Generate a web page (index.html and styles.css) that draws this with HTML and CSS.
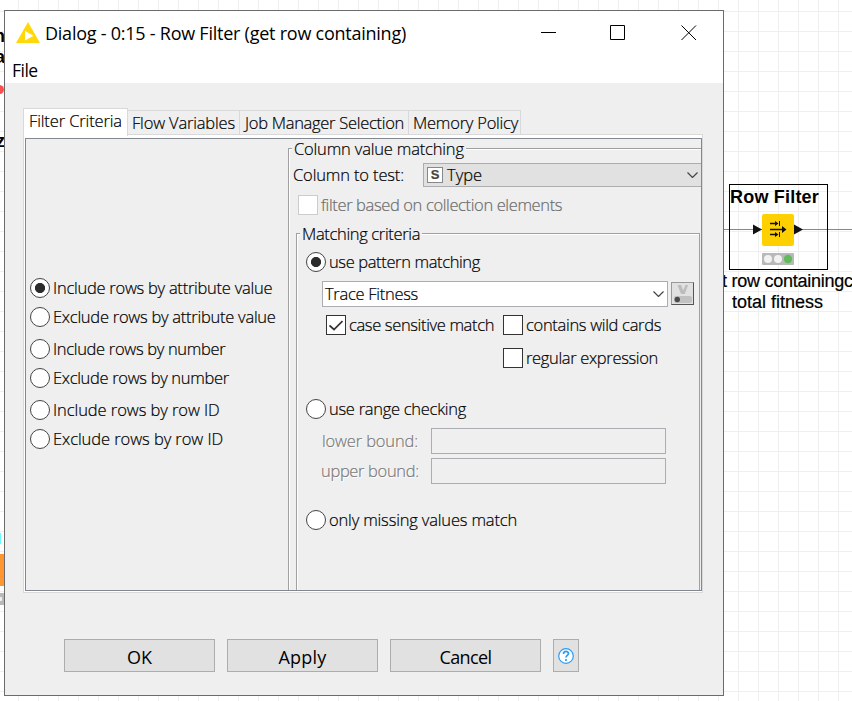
FILE: index.html
```html
<!DOCTYPE html>
<html lang="en">
<head>
<meta charset="utf-8">
<title>Row Filter</title>
<link rel="stylesheet" href="styles.css">
</head>
<body>
<main class="canvas">
  <b class="edge-text edge-n">n</b>
  <b class="edge-text edge-a">a</b>
  <b class="edge-text edge-z">z</b>
  <i class="edge-dot"></i><i class="edge-cyan"></i><i class="edge-orange"></i><i class="edge-gray"></i>

  <i class="wire"></i>
  <section class="node">
    <h2 class="node-title">Row Filter</h2>
    <svg class="node-icon" width="50" height="51" viewBox="0 0 50 51">
      <path d="M0 10.500v10l9-5zM41 10.500v10l9-5z" fill="#111"/>
      <rect x="9" width="32" height="32" rx="2" fill="#ffd000"/>
      <path d="M17 15.500h13M17 9.500h6M17 20.500h6" stroke="#111" stroke-width="1.300" fill="none"/>
      <path d="M26.500 7v5M26.500 18v5" stroke="#111"/>
      <path d="M29 12l4.500 3.500-4.500 3.500zM22 7l3.500 2.500-3.500 2.500zM22 18l3.500 2.500-3.500 2.500z" fill="#111"/>
      <rect x="9" y="39" width="32" height="12" rx="1" fill="#b9b9b9"/>
      <circle cx="15" cy="45" r="4" fill="#f2f2f2"/><circle cx="25" cy="45" r="4" fill="#f2f2f2"/><circle cx="35" cy="45" r="4.200" fill="#61bb5a"/>
    </svg>
  </section>
  <p class="node-caption">t row containingc<br><span class="caption-end">total fitness</span></p>

  <section class="window">
    <header class="titlebar">
      <svg class="app-icon" width="24" height="21" viewBox="0 0 24 21"><path d="M12 0L24 21H0z" fill="#ffd80c"/><path d="M9 9l8.500 4.800L9 18.500z" fill="#fff"/></svg>
      <h1 class="title">Dialog - 0:15 - Row Filter (get row containing)</h1>
      <svg class="controls" width="156" height="17" viewBox="0 0 156 17" fill="none" stroke="#000"><path d="M0 8.500h15M69.500 1.500h14v14h-14zM140.500 1.500l14.500 14.500M155 1.500l-14.500 14.500"/></svg>
    </header>
    <nav class="menubar">File</nav>

    <div class="body">
      <div class="tabs">
        <div class="tab tab-active">Filter Criteria</div>
        <div class="tab tab-flow">Flow Variables</div>
        <div class="tab tab-job">Job Manager Selection</div>
        <div class="tab tab-memory">Memory Policy</div>
      </div>
      <div class="pane"><div class="pane-inner">
        <div class="modes">
          <label class="option by-value"><i class="radio on"></i><span>Include rows by attribute value</span></label>
          <label class="option by-value"><i class="radio"></i><span>Exclude rows by attribute value</span></label>
          <label class="option by-number gap"><i class="radio"></i><span>Include rows by number</span></label>
          <label class="option by-number"><i class="radio"></i><span>Exclude rows by number</span></label>
          <label class="option by-id gap"><i class="radio"></i><span>Include rows by row ID</span></label>
          <label class="option by-id"><i class="radio"></i><span>Exclude rows by row ID</span></label>
        </div>
        <div class="group column-group">
          <div class="legend"><span>Column value matching</span></div>
          <div class="column-row">
            <span class="column-label">Column to test:</span>
            <div class="select"><b class="type-badge">S</b><span>Type</span>
              <svg class="chevron" width="11" height="6" viewBox="0 0 11 6"><path d="M.5.5l5 5 5-5" fill="none" stroke="#444" stroke-width="1.200"/></svg></div>
          </div>
          <label class="option disabled collection"><i class="box"></i><span>filter based on collection elements</span></label>
          <div class="group match-group">
            <div class="legend"><span>Matching criteria</span></div>
            <label class="option pattern"><i class="radio on"></i><span>use pattern matching</span></label>
            <div class="pattern-row">
              <div class="combo"><span>Trace Fitness</span>
                <svg class="chevron" width="11" height="6" viewBox="0 0 11 6"><path d="M.5.5l5 5 5-5" fill="none" stroke="#444" stroke-width="1.200"/></svg></div>
              <div class="var-button"><svg width="20" height="20" viewBox="0 0 20 20"><path d="M4.500 1H8l2.200 5.500L12.500 1H15l-3.200 9H8z" fill="#bcbcbc"/><rect x="1" y="12" width="18" height="7" rx="2" fill="#c1c1c1"/><circle cx="4.300" cy="15.500" r="2.700" fill="#4a4a4a"/></svg></div>
            </div>
            <div class="checks">
              <label class="option case"><i class="box"><svg width="14" height="11" viewBox="0 0 14 11"><path d="M.5 5.500l4.500 4L13.500 1" fill="none" stroke="#333" stroke-width="1.700"/></svg></i><span>case sensitive match</span></label>
              <label class="option wild"><i class="box"></i><span>contains wild cards</span></label>
              <label class="option regex"><i class="box"></i><span>regular expression</span></label>
            </div>
            <label class="option range"><i class="radio"></i><span>use range checking</span></label>
            <div class="bound lower"><span>lower bound:</span><i class="field"></i></div>
            <div class="bound upper"><span>upper bound:</span><i class="field"></i></div>
            <label class="option missing"><i class="radio"></i><span>only missing values match</span></label>
          </div>
        </div>
      </div></div>
      <footer class="buttons">
        <div class="button ok">OK</div>
        <div class="button apply">Apply</div>
        <div class="button cancel">Cancel</div>
        <div class="button help"><svg width="16" height="16" viewBox="0 0 16 16"><circle cx="8" cy="8" r="7.300" fill="#fff" stroke="#2a9df4" stroke-width="1.200"/><path d="M5.500 6c0-3.500 5-3.200 5-.5 0 2-2.500 1.800-2.500 4M8 11v2" fill="none" stroke="#2a9df4" stroke-width="1.700"/></svg></div>
      </footer>
    </div>
  </section>
</main>
</body>
</html>
```
FILE: styles.css
```css
* { box-sizing: border-box; margin: 0; }
body {
  font: 300 16.5px/20px "Open Sans", sans-serif;
  color: #000;
  white-space: nowrap;
}
svg { display: block; flex: none; }

/* Workflow canvas */
.canvas {
  position: relative;
  width: 852px;
  height: 701px;
  overflow: hidden;
  background:
    linear-gradient(#efefef 1px, transparent 1px) 0 11px / 20px 20px,
    linear-gradient(90deg, #efefef 1px, transparent 1px) 18px 0 / 20px 20px,
    #fff;
}
.edge-text { position: absolute; right: 847px; font: bold 18px/20px "Liberation Sans", sans-serif; }
.edge-n { top: 26px; }
.edge-a { top: 47px; }
.edge-z { top: 131px; }
.edge-dot { position: absolute; left: -5px; top: 85px; width: 9px; height: 9px; border-radius: 50%; background: #ff4d4d; }
.edge-cyan { position: absolute; left: 0; top: 533px; width: 1px; height: 11px; background: #6ff; }
.edge-orange { position: absolute; left: 0; top: 554px; width: 4px; height: 32px; background: #ff9632; }
.edge-gray { position: absolute; left: 0; top: 593px; width: 4px; height: 12px; background: radial-gradient(circle at 0 50%, #f2f2f2 2px, #b9b9b9 2.500px); }
.wire { position: absolute; left: 724px; top: 229px; width: 128px; height: 1px; background: #888; }
.node { position: absolute; left: 729px; top: 184px; width: 99px; height: 86px; border: 1px solid #000; }
.node-title { font: bold 18px/22px "Liberation Sans", sans-serif; letter-spacing: .2px; margin-top: 1px; }
.node-icon { margin: 6px 0 0 23px; }
.node-caption {
  position: absolute;
  left: 722px;
  top: 271px;
  font: 400 18px/21px "Liberation Sans", sans-serif;
  letter-spacing: -.25px;
  -webkit-text-stroke: .2px;
}
.caption-end { margin-left: 10px; letter-spacing: 0; }

/* Dialog window */
.window {
  position: absolute;
  left: 4px;
  top: 10px;
  width: 720px;
  height: 686px;
  border: 1px solid #6b6b6b;
  background: #efefef;
  display: flex;
  flex-direction: column;
}
.titlebar { display: flex; align-items: flex-start; height: 46px; padding: 11px 26px 0 11px; background: #fff; }
.title { margin: 0 0 0 5px; font-size: 18px; line-height: 22px; font-weight: 400; letter-spacing: -.242px; }
.controls { margin: 2px 0 0 auto; }
.menubar { height: 26px; padding: 2px 0 0 7px; background: #fff; font-size: 17.5px; line-height: 22px; font-weight: 400; letter-spacing: -.5px; }
.body { flex: 1; padding: 26px 0 0 18px; -webkit-text-stroke: .2px; }

.tabs { display: flex; align-items: flex-end; height: 26px; }
.tab {
  height: 25px;
  padding: 2px 0 0 4px;
  border: 1px solid #d9d9d9;
  border-left: 0;
}
.tab-active { position: relative; z-index: 1; width: 105px; height: 28px; margin-bottom: -1px; padding: 2px 0 0 5px; border-left: 1px solid #d9d9d9; border-bottom: 0; background: #fff; letter-spacing: -.13px; }
.tab-flow { width: 112px; letter-spacing: -.17px; }
.tab-job { width: 169px; padding-left: 5px; letter-spacing: -.285px; }
.tab-memory { width: 112px; letter-spacing: -.23px; }

.pane { width: 680px; height: 459px; margin-top: -1px; padding: 3px 0 1px 1px; border: 1px solid #d9d9d9; background: #fff; }
.pane-inner { display: flex; width: 677px; height: 453px; overflow: hidden; border: 1px solid #828790; background: #efefef; }

/* Controls */
.option { display: flex; align-items: center; height: 20px; gap: 3px; }
.radio { flex: none; width: 20px; height: 20px; border: 1px solid #444; border-radius: 50%; background: #fff; }
.radio.on { background: radial-gradient(circle, #2c2c2c 4.700px, #fff 5.400px); }
.box { flex: none; display: flex; align-items: center; justify-content: center; width: 20px; height: 20px; border: 1px solid #333; background: #fff; }
.disabled { color: #6d6d6d; }
.disabled .box { border-color: #ccc; }

.modes { flex: none; display: flex; flex-direction: column; gap: 9px; width: 262px; padding: 139px 0 0 4px; }
.gap { margin-top: 3px; }
.by-value { letter-spacing: -.26px; }
.by-number { letter-spacing: -.32px; }
.by-id { letter-spacing: -.07px; }

.group { border: 1px solid #a0a0a0; box-shadow: inset 1px 1px #fff; }
.legend { display: flex; height: 20px; margin-top: -10px; }
.legend span { padding: 0 2px; background: #efefef; }
.column-group { width: 420px; height: 460px; margin-top: 9px; flex: none; letter-spacing: -.18px; }
.column-group > .legend { padding-left: 3px; }
.column-row { display: flex; align-items: center; height: 24px; margin-top: 4px; padding-left: 4px; }
.column-label { width: 130px; letter-spacing: -.145px; }
.select { display: flex; align-items: center; width: 280px; height: 24px; padding: 0 5px 0 3px; border: 1px solid #adadad; background: #e1e1e1; letter-spacing: 0; }
.type-badge { width: 16px; height: 16px; margin-right: 4px; border: 1px solid #888; background: #fff; color: #444; font: bold 13px/14px "Liberation Sans", sans-serif; text-align: center; }
.chevron { margin-left: auto; }
.select .chevron { margin-right: -1px; }
.collection { margin: 8px 0 0 9px; letter-spacing: -.37px; }

.match-group { width: 404px; height: 420px; margin: 18px 0 0 7px; letter-spacing: -.34px; }
.match-group > .legend { padding-left: 3px; }
.pattern { margin: 8px 0 0 9px; letter-spacing: -.37px; }
.pattern-row { display: flex; gap: 3px; margin: 9px 0 0 25px; }
.combo { display: flex; align-items: center; width: 346px; height: 26px; padding: 0 3px 0 2px; border: 1px solid #abadb3; background: #fff; letter-spacing: -.29px; }
.var-button { display: flex; align-items: center; justify-content: center; width: 23px; height: 23px; margin-top: 1px; border: 1px solid; border-color: #999 #555 #555 #999; background: #e1e1e1; }
.checks { display: grid; grid-template-columns: 177px auto; row-gap: 13px; margin: 8px 0 0 29px; }
.case { letter-spacing: -.355px; }
.wild { letter-spacing: -.31px; }
.regex { grid-column: 2; }
.range { margin: 31px 0 0 9px; letter-spacing: -.28px; }
.bound { display: flex; align-items: center; height: 26px; margin: 9px 0 0 24px; color: #7a7a7a; text-shadow: 1px 1px #fff; }
.bound span { width: 97px; margin-right: 13px; text-align: right; }
.bound.upper { margin-top: 4px; }
.lower { letter-spacing: -.15px; }
.field { width: 235px; height: 26px; border: 1px solid #abadb3; }
.missing { margin: 26px 0 0 9px; letter-spacing: -.17px; }

.buttons { display: flex; gap: 12px; margin: 46px 0 0 41px; }
.button { display: flex; align-items: center; justify-content: center; width: 151px; height: 33px; padding-top: 2px; border: 1px solid #adadad; background: #e1e1e1; font-size: 18px; font-weight: 400; -webkit-text-stroke: 0; }
.apply { letter-spacing: .2px; }
.cancel { letter-spacing: -.6px; }
.help { width: 26px; padding: 0; }
```
